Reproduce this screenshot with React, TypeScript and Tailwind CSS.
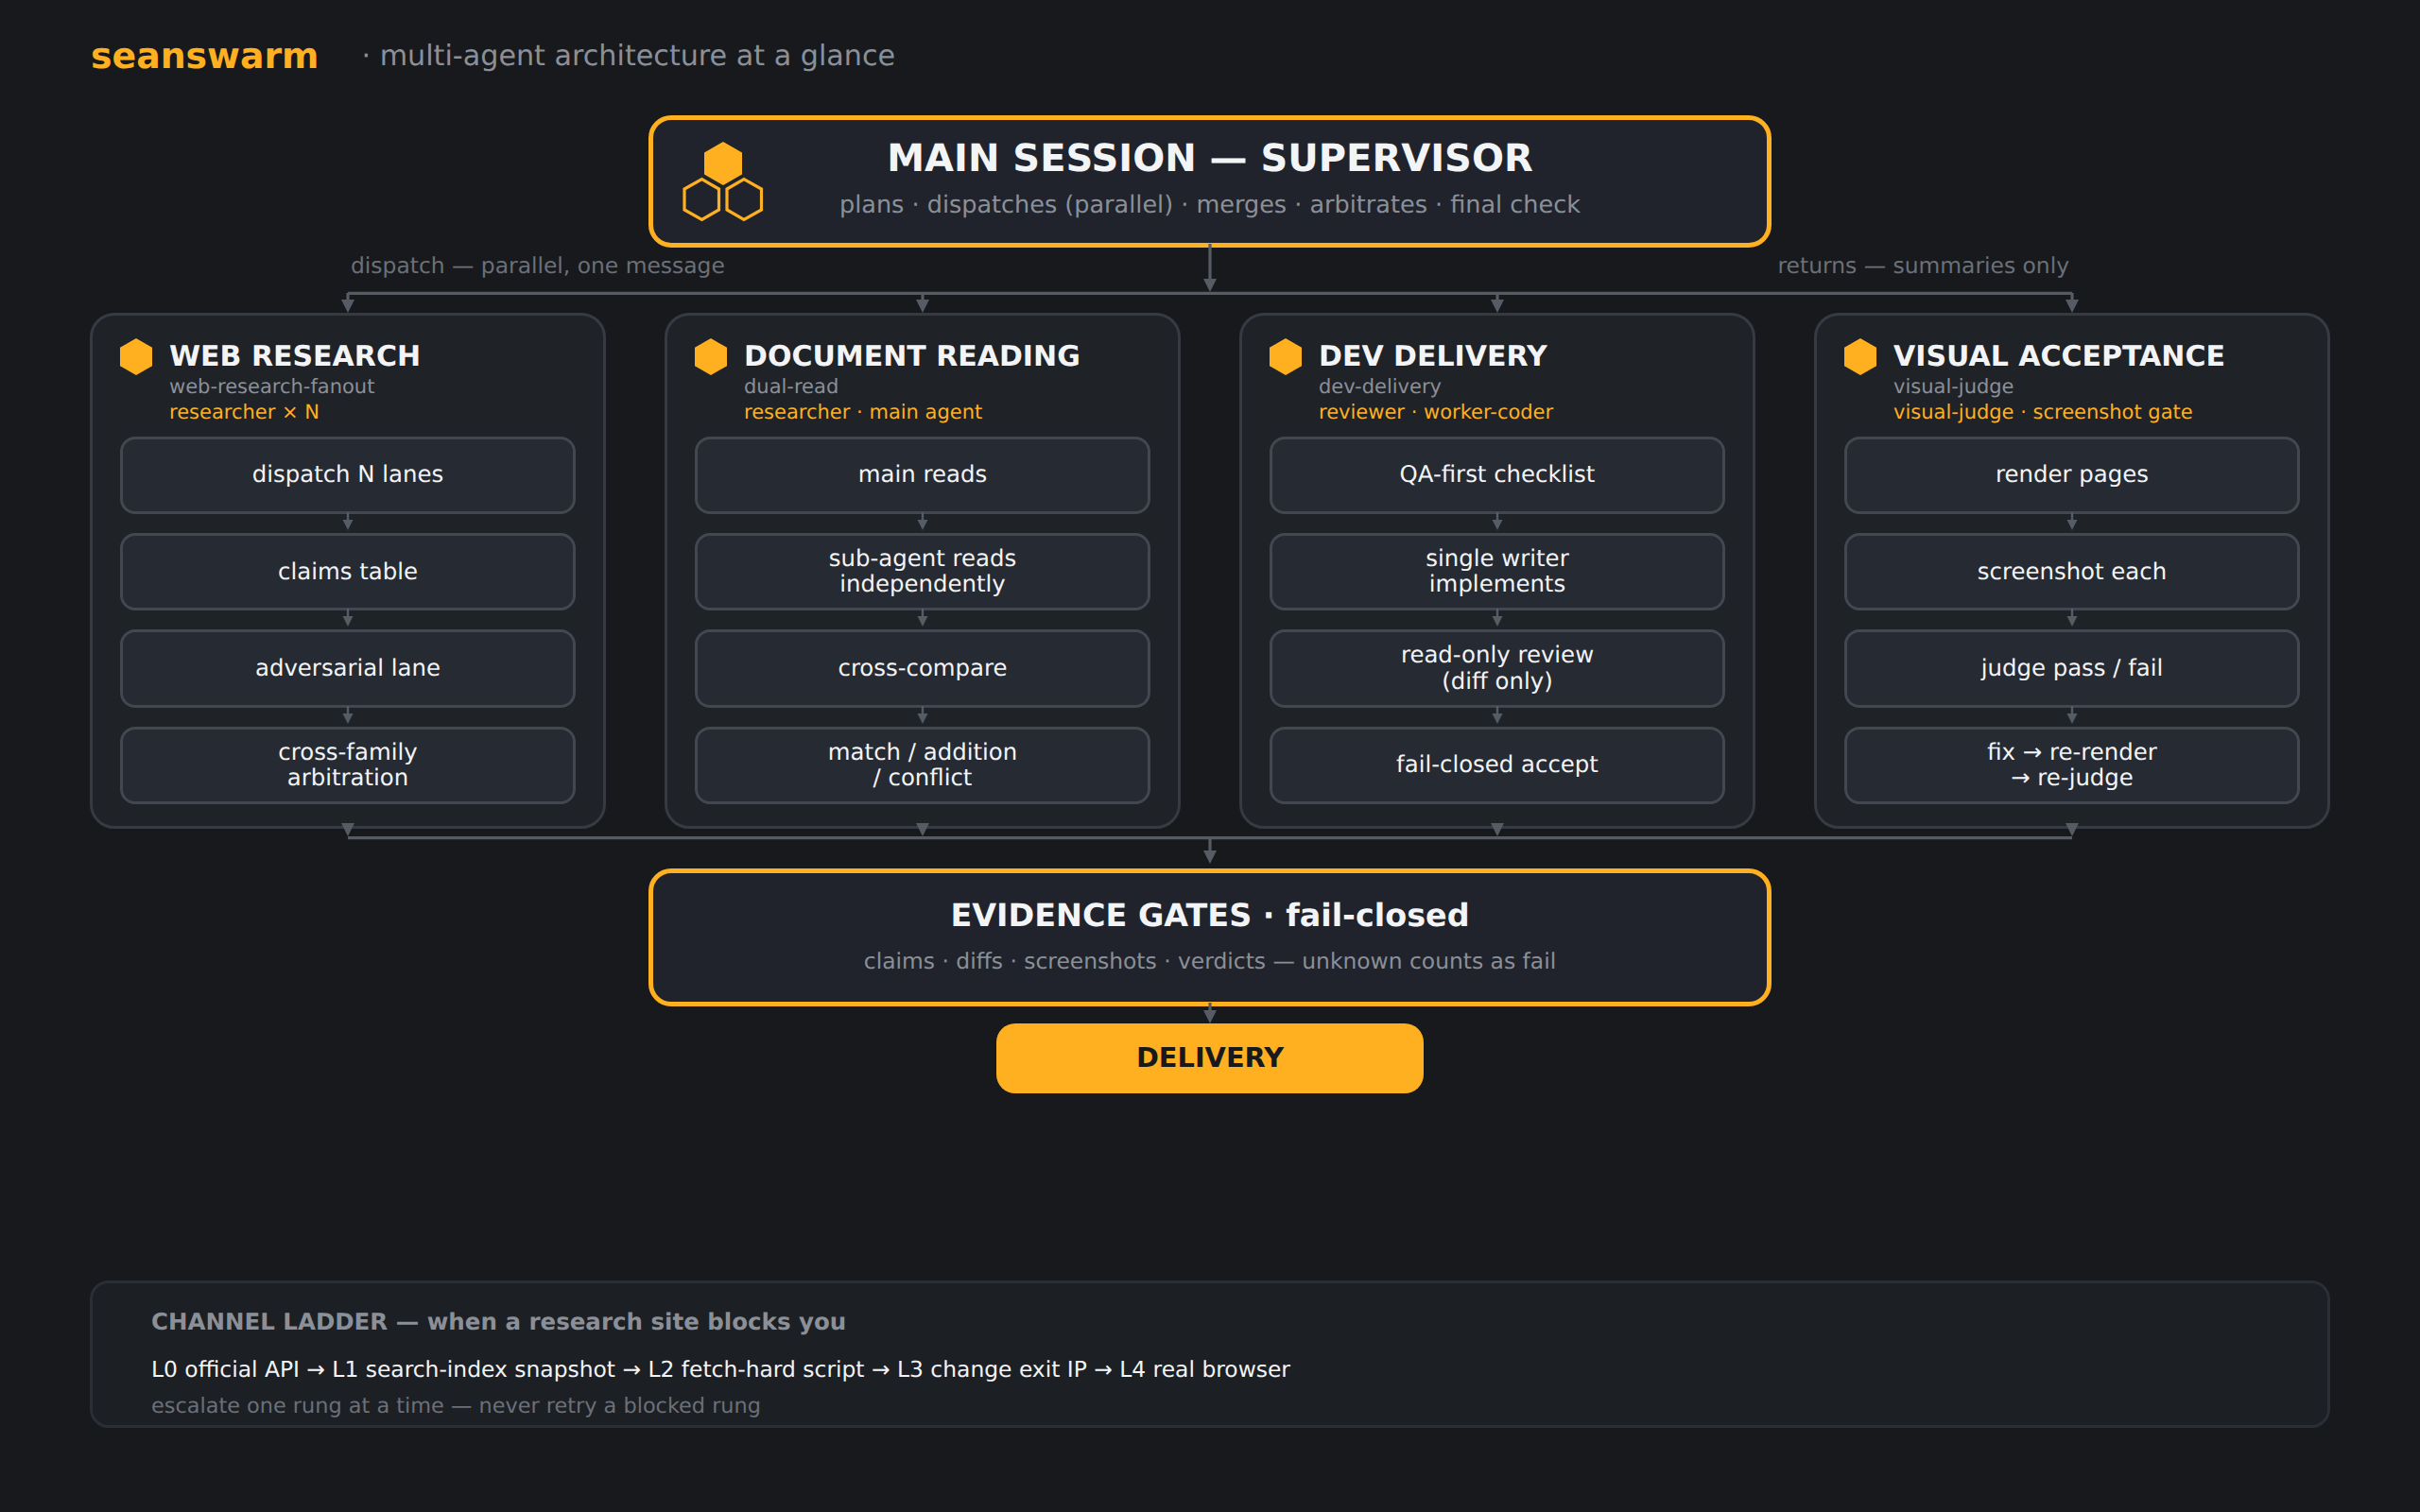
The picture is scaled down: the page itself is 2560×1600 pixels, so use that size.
const lanes = [
  {
    title: "WEB RESEARCH",
    skill: "web-research-fanout",
    role: "researcher × N",
    steps: [["dispatch N lanes"], ["claims table"], ["adversarial lane"], ["cross-family", "arbitration"]],
  },
  {
    title: "DOCUMENT READING",
    skill: "dual-read",
    role: "researcher · main agent",
    steps: [["main reads"], ["sub-agent reads", "independently"], ["cross-compare"], ["match / addition", "/ conflict"]],
  },
  {
    title: "DEV DELIVERY",
    skill: "dev-delivery",
    role: "reviewer · worker-coder",
    steps: [["QA-first checklist"], ["single writer", "implements"], ["read-only review", "(diff only)"], ["fail-closed accept"]],
  },
  {
    title: "VISUAL ACCEPTANCE",
    skill: "visual-judge",
    role: "visual-judge · screenshot gate",
    steps: [["render pages"], ["screenshot each"], ["judge pass / fail"], ["fix → re-render", "→ re-judge"]],
  },
]

const laneCenters = [273, 881, 1489, 2097]
const LINE = "#555c66"

function Head({ x, y, w = 14, h = 14 }: { x: number; y: number; w?: number; h?: number }) {
  return <polygon points={`${x - w / 2},${y} ${x + w / 2},${y} ${x},${y + h}`} fill={LINE} />
}

function StepArrow() {
  return (
    <svg width="12" height="20" className="mx-auto block shrink-0 overflow-visible">
      <line x1="6" y1="-2" x2="6" y2="7" stroke={LINE} strokeWidth="2.4" />
      <Head x={6} y={6} w={11} h={11} />
    </svg>
  )
}

function Step({ lines }: { lines: string[] }) {
  return (
    <div className="flex h-[82.4px] shrink-0 flex-col items-center justify-center rounded-[16px] border-[3px] border-[#434850] bg-[#262a32] pb-[2px] text-center text-[24.4px] leading-[27.2px] text-[#f3f4f6]">
      {lines.map((l) => (
        <span key={l}>{l}</span>
      ))}
    </div>
  )
}

function Lane({ title, skill, role, steps }: (typeof lanes)[number]) {
  return (
    <div className="flex h-[546px] flex-col rounded-[26px] border-[3px] border-[#363b43] bg-[#1f2227] px-[29px] pt-[24px]">
      <div className="flex h-[103.6px] shrink-0 gap-[18px]">
        <svg width="34" height="39" className="shrink-0">
          <polygon points="17,0 34,9.75 34,29.25 17,39 0,29.25 0,9.75" fill="#ffb020" />
        </svg>
        <div className="flex flex-col pt-[2px]">
          <div className="h-[36px] text-[30px] leading-[36px] font-bold text-[#f3f4f6]">{title}</div>
          <div className="mt-[-1px] h-[28px] text-[21px] leading-[28px] text-[#8b9098]">{skill}</div>
          <div className="mt-[-1px] h-[28px] text-[21px] leading-[28px] text-[#ffb020]">{role}</div>
        </div>
      </div>
      {steps.map((s, i) => (
        <div key={s[0]} className="contents">
          {i > 0 && <StepArrow />}
          <Step lines={s} />
        </div>
      ))}
    </div>
  )
}

function SwarmIcon() {
  return (
    <svg width="86" height="85" className="block">
      <polygon points="43,0 63,11.5 63,34.5 43,46 23,34.5 23,11.5" fill="#ffb020" />
      <polygon points="20.5,39.7 38.5,50 38.5,72 20.5,82.3 2,72 2,50" fill="none" stroke="#ffb020" strokeWidth="3.2" />
      <polygon points="65,39.7 83.5,50 83.5,72 65,82.3 47,72 47,50" fill="none" stroke="#ffb020" strokeWidth="3.2" />
    </svg>
  )
}

export default function App() {
  return (
    <div className="flex h-[1600px] w-[2560px] flex-col overflow-hidden bg-[#17191d] px-[95px] font-['DejaVu_Sans',sans-serif] [text-rendering:geometricPrecision]">
      <header className="flex h-[122px] shrink-0 items-start gap-[45px] pt-[36px] pl-[1px]">
        <span className="text-[37.8px] leading-[46px] font-bold text-[#ffb020]">seanswarm</span>
        <span className="mt-[1px] text-[30.2px] leading-[46px] text-[#8b9098]">· multi-agent architecture at a glance</span>
      </header>

      <div className="mx-auto grid h-[140px] w-[1188px] shrink-0 grid-cols-[1fr_auto_1fr] items-center rounded-[24px] border-[5px] border-[#ffb020] bg-[#20232b]">
        <div className="pl-[31px]">
          <SwarmIcon />
        </div>
        <div className="flex flex-col items-center">
          <div className="text-[40px] leading-[51px] font-bold text-[#f3f4f6]">MAIN SESSION — SUPERVISOR</div>
          <div className="text-[25.5px] leading-[47px] text-[#8b9098]">plans · dispatches (parallel) · merges · arbitrates · final check</div>
        </div>
        <div />
      </div>

      <div className="relative h-[69px] shrink-0">
        <svg width="2370" height="69" className="absolute inset-0 overflow-visible">
          <line x1="273" y1="48.3" x2="2097" y2="48.3" stroke={LINE} strokeWidth="3.2" />
          <line x1="1185" y1="-4" x2="1185" y2="34" stroke={LINE} strokeWidth="3.2" />
          <Head x={1185} y={33} />
          {laneCenters.map((x) => (
            <g key={x}>
              <line x1={x} y1="48" x2={x} y2="57" stroke={LINE} strokeWidth="3.2" />
              <Head x={x} y={55} />
            </g>
          ))}
        </svg>
        <div className="flex h-[40px] items-center justify-between px-[276px] text-[23.4px] text-[#6b7078]">
          <span>dispatch — parallel, one message</span>
          <span>returns — summaries only</span>
        </div>
      </div>

      <div className="grid shrink-0 grid-cols-4 gap-[62px]">
        {lanes.map((l) => (
          <Lane key={l.title} {...l} />
        ))}
      </div>

      <svg width="2370" height="42" className="relative block shrink-0 overflow-visible">
        <line x1="273" y1="9.7" x2="2097" y2="9.7" stroke={LINE} strokeWidth="3.2" />
        {laneCenters.map((x) => (
          <Head key={x} x={x} y={-6} />
        ))}
        <line x1="1185" y1="9.7" x2="1185" y2="24" stroke={LINE} strokeWidth="3.2" />
        <Head x={1185} y={23} />
      </svg>

      <div className="mx-auto flex h-[146px] w-[1188px] shrink-0 flex-col items-center justify-center rounded-[24px] border-[5px] border-[#ffb020] bg-[#20232b]">
        <div className="text-[33.4px] leading-[50px] font-bold text-[#f3f4f6]">EVIDENCE GATES · fail-closed</div>
        <div className="text-[23.4px] leading-[46px] text-[#8b9098]">claims · diffs · screenshots · verdicts — unknown counts as fail</div>
      </div>

      <svg width="2370" height="18" className="relative block shrink-0 overflow-visible">
        <line x1="1185" y1="-4" x2="1185" y2="5" stroke={LINE} strokeWidth="3.2" />
        <Head x={1185} y={4} />
      </svg>

      <div className="mx-auto flex h-[74px] w-[452px] shrink-0 items-center justify-center rounded-[20px] bg-[#ffb020] text-[28.8px] font-bold text-[#17191d]">
        DELIVERY
      </div>

      <div className="mt-[198px] flex h-[156px] shrink-0 flex-col rounded-[20px] border-[3px] border-[#2a2e35] bg-[#1c1f24] pt-[23px] pl-[62px]">
        <div className="text-[24.5px] leading-[36px] font-bold text-[#8b9098]">CHANNEL LADDER — when a research site blocks you</div>
        <div className="mt-[13.5px] text-[23.4px] leading-[36px] text-[#f3f4f6]">L0 official API → L1 search-index snapshot → L2 fetch-hard script → L3 change exit IP → L4 real browser</div>
        <div className="mt-[3px] text-[22.4px] leading-[36px] text-[#6b7078]">escalate one rung at a time — never retry a blocked rung</div>
      </div>
    </div>
  )
}
